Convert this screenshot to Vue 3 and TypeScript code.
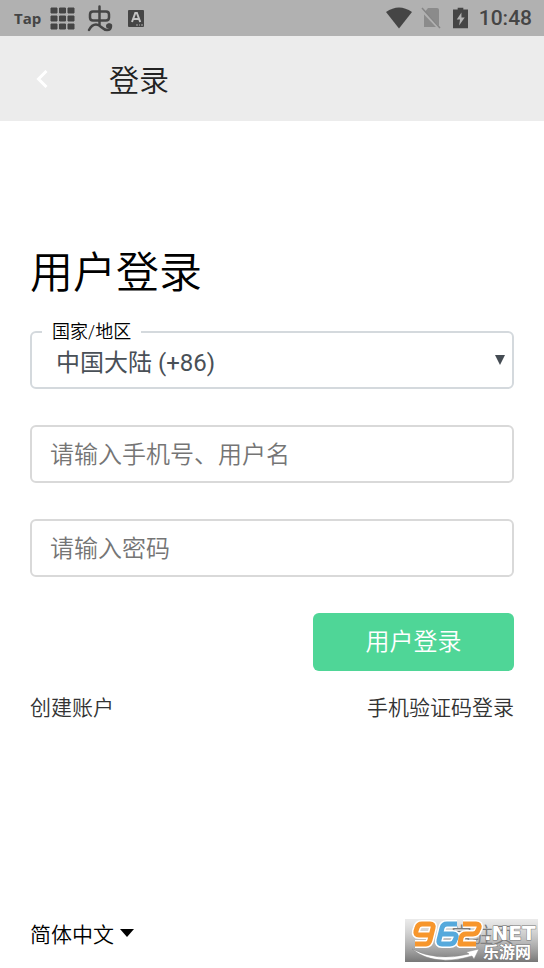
<script setup lang="ts">
import { ref } from 'vue'

const region = ref('+86')
const account = ref('')
const password = ref('')
</script>

<template>
  <div class="page">
    <div class="status">
      <div class="status-side">
        <span class="tap">Tap</span>
        <svg class="grid-icon" viewBox="0 0 25 23" aria-hidden="true">
          <path d="M1 1h6v5H1zM9.500 1h6v5h-6zM18 1h6v5h-6zM1 9h6v5H1zM9.500 9h6v5h-6zM18 9h6v5h-6zM1 17h6v5H1zM9.500 17h6v5h-6zM18 17h6v5h-6z" stroke="#454545" stroke-linejoin="round" fill="#454545" />
        </svg>
        <svg class="bug" viewBox="0 0 26 27" aria-hidden="true">
          <g fill="none" stroke="#454545" stroke-width="2.500" stroke-linecap="round" stroke-linejoin="round">
            <path d="M12.500 1.500v18M6 6.500h13q3 0 3 3v3q0 3-3 3H6q-3 0-3-3v-3q0-3 3-3z" />
            <path d="M2 25c2-4 4-5.500 7-5.500 5 0 6 5.500 11 5.500 3 0 4-2 4-4s-3-2-3 0" />
          </g>
          <circle cx="21.500" cy="21" r="2.500" fill="#454545" />
        </svg>
        <svg class="app-a" viewBox="0 0 17 19" aria-hidden="true">
          <rect x="0" y="1" width="16" height="17" rx="1" fill="#454545" />
          <path d="M4 13 7.300 4h1.600l3.300 9M5.500 10h5" fill="none" stroke="#c4c4c4" stroke-width="2" />
          <path d="M8 16h2m1 0h1m1 0h2" stroke="#aaa" />
        </svg>
      </div>
      <div class="status-side">
        <svg class="wifi" viewBox="0 0 28 22" aria-hidden="true">
          <path d="M1 5Q14-4 27 5L14 21.500z" fill="#454545" />
        </svg>
        <svg class="sim" viewBox="0 0 20 22" aria-hidden="true">
          <path d="M7 1h9q2 0 2 2v17H3V6z" fill="#8b8b8b" />
          <path d="M0 2 18 21" stroke="#b1b1b1" stroke-width="3" />
          <path d="M1 1 19 21" stroke="#858585" stroke-width="1.500" />
        </svg>
        <svg class="battery" viewBox="0 0 16 22" aria-hidden="true">
          <path d="M5 2V0h6v2h5v20H0V2z" fill="#454545" />
          <path d="M9 5 4 12.500h3.500L6.500 19l6-8.500H9z" fill="#b1b1b1" />
        </svg>
        <span class="time">10:48</span>
      </div>
    </div>

    <header class="bar">
      <button class="back" type="button" aria-label="返回">
        <svg viewBox="0 0 12 18" aria-hidden="true">
          <path d="M10.500 1 2.500 9l8 8" fill="none" stroke="#fff" stroke-width="3" />
        </svg>
      </button>
      <span class="bar-title">登录</span>
    </header>

    <main class="content">
      <h1>用户登录</h1>
      <form @submit.prevent>
        <fieldset class="region">
          <legend><label for="region">国家/地区</label></legend>
          <div class="select-wrap">
            <select id="region" v-model="region">
              <option value="+86">中国大陆 (+86)</option>
            </select>
            <svg viewBox="0 0 10 10" aria-hidden="true"><path d="M0 0h10L5 10z" fill="#454c53" /></svg>
          </div>
        </fieldset>
        <input v-model="account" class="field" type="text" placeholder="请输入手机号、用户名" aria-label="请输入手机号、用户名" />
        <input v-model="password" class="field" type="password" placeholder="请输入密码" aria-label="请输入密码" />
        <button class="submit" type="submit">用户登录</button>
      </form>
      <nav class="links">
        <a href="#register">创建账户</a>
        <a href="#code">手机验证码登录</a>
      </nav>
    </main>

    <footer class="footer">
      <button class="language" type="button">
        简体中文
        <svg viewBox="0 0 14 8" aria-hidden="true"><path d="M0 0h14L7 8z" fill="#000" /></svg>
      </button>
      <a class="help" href="#help">常驻页</a>
      <svg class="watermark" viewBox="0 0 133 43" role="img" aria-label="962.NET 乐游网">
        <defs>
          <linearGradient id="shade" x1="0" y1="0" x2="0" y2="1">
            <stop offset="0" stop-color="#ccc" stop-opacity="0.400" />
            <stop offset="1" stop-color="#777" />
          </linearGradient>
        </defs>
        <rect width="133" height="43" fill="url(#shade)" />
        <path d="M7 30Q32 43 64 35l-3-2 13-3-5 10-2-3Q29 48 7 30z" fill="#fff" stroke="#888" stroke-width=".5" />
        <g fill="none" stroke-linejoin="round">
          <g stroke="#fff" stroke-width="8">
            <path d="M10 25h11q3 0 4-4l3-12q1-4-3-4h-8q-4 0-5 4l-1 3q-1 4 3 4h11" />
            <path d="M52 5H42q-4 0-5 4l-3 12q-1 4 3 4h8q4 0 5-4l1-2q1-4-3-4H36" />
            <path d="M58 5h13q4 0 3 4l-1 2q-1 4-5 4h-7q-4 0-5 4l-1 6h16" />
          </g>
          <g stroke-width="5">
            <path d="M10 25h11q3 0 4-4l3-12q1-4-3-4h-8q-4 0-5 4l-1 3q-1 4 3 4h11" stroke="#f7962c" />
            <path d="M52 5H42q-4 0-5 4l-3 12q-1 4 3 4h8q4 0 5-4l1-2q1-4-3-4H36" stroke="#55a9dc" />
            <path d="M58 5h13q4 0 3 4l-1 2q-1 4-5 4h-7q-4 0-5 4l-1 6h16" stroke="#f7962c" />
          </g>
        </g>
        <text class="net" x="79" y="21">.NET</text>
        <text class="site" x="78" y="39">乐游网</text>
      </svg>
    </footer>
  </div>
</template>

<style>
body {
  margin: 0;
  background: #fff;
}
</style>

<style scoped>
.page {
  display: flex;
  flex-direction: column;
  min-height: 100vh;
  font-family: Roboto, "Noto Sans CJK SC", sans-serif;
  font-weight: 350;
  color: #000;
}

.page * {
  box-sizing: border-box;
}

svg {
  display: block;
}

button,
input,
select {
  font: inherit;
}

.status {
  display: flex;
  justify-content: space-between;
  height: 36px;
  padding: 0 12px 0 14px;
  background: #b1b1b1;
}

.status-side {
  display: flex;
  align-items: center;
}

.tap {
  width: 36px;
  font: 700 15px/36px "Open Sans", sans-serif;
  color: #454545;
}

.grid-icon {
  width: 25px;
  height: 23px;
  margin-right: 12px;
}

.bug {
  width: 26px;
  height: 27px;
  margin-right: 15px;
}

.app-a {
  width: 17px;
  height: 19px;
}

.wifi {
  width: 28px;
  height: 22px;
  margin-right: 8px;
}

.sim {
  width: 20px;
  height: 22px;
  margin-right: 12px;
}

.battery {
  width: 15px;
  height: 22px;
  margin-right: 11px;
}

.time {
  font-size: 21px;
  font-weight: 500;
  line-height: 38px;
  color: #454545;
}

.bar {
  display: flex;
  align-items: center;
  height: 85px;
  padding: 0 30px;
  background: #ececec;
}

.back {
  display: flex;
  width: 79px;
  padding: 0 6px;
  border: 0;
  background: none;
}

.back svg {
  width: 12px;
  height: 18px;
}

.bar-title {
  padding-top: 4px;
  font-size: 30px;
  line-height: 40px;
  color: #222;
}

.content {
  padding: 120px 30px 0;
}

h1 {
  margin: 0;
  font-size: 43px;
  font-weight: 350;
  line-height: 64px;
}

form {
  display: flex;
  flex-direction: column;
  gap: 36px;
  margin-top: 16px;
}

.region {
  height: 68px;
  margin: 0;
  padding: 0;
  min-width: 0;
  border: 2px solid #d4d9dd;
  border-radius: 6px;
}

.region legend {
  margin-left: 10px;
  padding: 0 10px;
  font-size: 18px;
  line-height: 22px;
}

.select-wrap {
  display: grid;
  grid-template-columns: 1fr 17px;
  align-items: center;
}

.select-wrap select {
  grid-area: 1 / 1 / 2 / 3;
  width: 100%;
  height: 40px;
  padding: 0 24px;
  border: 0;
  background: none;
  appearance: none;
  font-size: 24px;
  font-weight: 400;
  color: #495057;
}

.select-wrap svg {
  grid-area: 1 / 2;
  width: 10px;
  height: 10px;
  margin-bottom: 6px;
  pointer-events: none;
}

.field {
  width: 100%;
  height: 58px;
  padding: 2px 18px 0;
  border: 2px solid #d9d9d9;
  border-radius: 6px;
  background: #fff;
  font-size: 24px;
}

.field::placeholder {
  color: #757575;
}

.submit {
  align-self: flex-end;
  width: 201px;
  height: 58px;
  padding: 0 0 6px;
  border: 0;
  border-radius: 6px;
  background: #4fd697;
  font-size: 24px;
  color: #fff;
}

.links {
  display: flex;
  justify-content: space-between;
  margin-top: 20px;
  font-size: 21px;
  line-height: 34px;
}

.links a {
  color: #333;
  text-decoration: none;
}

.footer {
  position: relative;
  display: flex;
  align-items: center;
  justify-content: space-between;
  margin-top: auto;
  padding: 0 30px 17px;
  font-size: 21px;
  line-height: 32px;
}

.language {
  display: flex;
  align-items: center;
  gap: 6px;
  padding: 0;
  border: 0;
  background: none;
  color: #000;
}

.language svg {
  width: 14px;
  height: 8px;
  margin-bottom: 4px;
}

.help {
  color: #333;
  text-decoration: none;
}

.watermark {
  position: absolute;
  right: 6px;
  bottom: 6px;
  width: 133px;
  height: 43px;
}

.net {
  font: 700 20px "DejaVu Sans", sans-serif;
  fill: #fff;
  stroke: #777;
  stroke-width: 1px;
  paint-order: stroke;
}

.site {
  font: 700 16px "Noto Sans CJK SC", sans-serif;
  fill: #fff;
  stroke: #777;
  stroke-width: 1px;
  paint-order: stroke;
}
</style>
